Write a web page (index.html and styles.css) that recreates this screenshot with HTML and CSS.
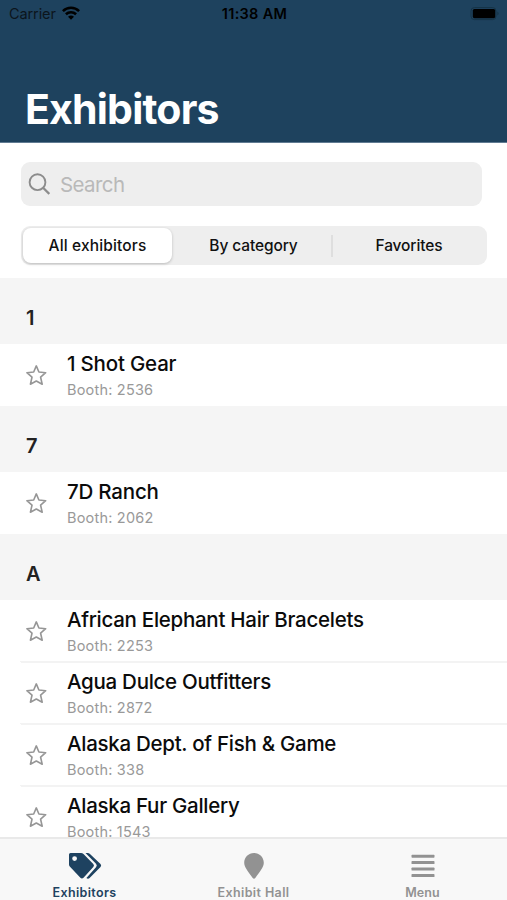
FILE: index.html
```html
<!DOCTYPE html>
<html lang="en">
<head>
<meta charset="utf-8">
<title>Exhibitors</title>
<link rel="stylesheet" href="styles.css">
</head>
<body>
<svg class="defs" aria-hidden="true">
  <symbol id="star" viewBox="0 0 22 22"><path d="M11.300 1.900 13.900 8 20.700 8.700 15.600 13.200 17.200 20.200 11.300 17 5.400 20.200 7 13.200 1.900 8.700 8.700 8Z" fill="none" stroke="#969696" stroke-width="1.600" stroke-linejoin="round"/></symbol>
</svg>
<div class="app">
  <header class="header">
    <div class="status">
      <div class="carrier"><span>Carrier</span>
        <svg class="wifi" width="18" height="14" viewBox="0 0 18 14" fill="none" stroke="#000" stroke-width="2.6"><path d="M.9 5.1C5.5.7 12.500.7 17.100 5.100"/><path d="M3.900 8.300C6.800 5.600 11.200 5.600 14.100 8.300"/><path d="M9 13.800 6 10.700Q9 8.400 12 10.700Z" fill="#000" stroke="none"/></svg>
      </div>
      <time class="clock">11:38 AM</time>
      <svg class="battery" width="30" height="14" viewBox="0 0 30 14"><rect x="1" y=".6" width="25" height="12" rx="3.4" fill="none" stroke="#163346" stroke-width="1"/><rect x="2.800" y="2" width="22.400" height="9.200" rx="1.600"/><path d="M27.400 4.600q2.400 2 0 4z" fill="#163346"/></svg>
    </div>
    <h1>Exhibitors</h1>
  </header>
  <main>
    <div class="search">
      <svg width="22" height="22" viewBox="0 0 22 22" fill="none" stroke="#8c8c8c" stroke-width="1.9"><circle cx="9.500" cy="9.200" r="7.900"/><path d="m15.100 14.800 6.200 6.100" stroke-width="2.300"/></svg>
      <span>Search</span>
    </div>
    <div class="segments">
      <div class="segment active"><span>All exhibitors</span></div>
      <div class="segment"><span>By category</span></div>
      <div class="segment divided"><span>Favorites</span></div>
    </div>
    <section><h2>1</h2>
      <article><svg class="star"><use href="#star"/></svg><div class="info"><h3>1 Shot Gear</h3><p>Booth: 2536</p></div></article>
    </section>
    <section><h2>7</h2>
      <article><svg class="star"><use href="#star"/></svg><div class="info"><h3>7D Ranch</h3><p>Booth: 2062</p></div></article>
    </section>
    <section><h2>A</h2>
      <article><svg class="star"><use href="#star"/></svg><div class="info"><h3>African Elephant Hair Bracelets</h3><p>Booth: 2253</p></div></article>
      <article><svg class="star"><use href="#star"/></svg><div class="info"><h3>Agua Dulce Outfitters</h3><p>Booth: 2872</p></div></article>
      <article><svg class="star"><use href="#star"/></svg><div class="info"><h3>Alaska Dept. of Fish &amp; Game</h3><p>Booth: 338</p></div></article>
      <article><svg class="star"><use href="#star"/></svg><div class="info"><h3>Alaska Fur Gallery</h3><p>Booth: 1543</p></div></article>
    </section>
  </main>
  <nav class="tabs">
    <div class="tab current"><svg width="34" height="28" viewBox="0 0 34 28"><path fill="#1e4260" fill-rule="evenodd" d="M2.500 1H13q1.500 0 2.500 1L25.300 12q1.400 1.500 0 3L15.500 25.700q-1.600 1.400-3.100 0L2 14.800Q1 13.800 1 12.400V2.500Q1 1 2.500 1ZM6.600 4.200a2.400 2.400 0 1 0 0 4.800 2.400 2.400 0 0 0 0-4.800Z"/><path fill="#1e4260" d="M17.500 1h2.200q1.200 0 2 .8L32.500 12q1.400 1.500 0 3L21.600 26q-1.700 1.500-3.200-.1L28 15.300q1.600-1.800 0-3.600Z"/></svg><span>Exhibitors</span></div>
    <div class="tab hall"><svg width="34" height="28" viewBox="0 0 34 28"><path fill="#929292" d="M17 1c5.500 0 9.800 4.300 9.800 9.700 0 4.500-4.300 9.300-8.500 15.200q-1.300 1.600-2.600 0C11.500 20 7.200 15.200 7.200 10.700 7.200 5.300 11.500 1 17 1Z"/></svg><span>Exhibit Hall</span></div>
    <div class="tab menu"><svg width="34" height="28" viewBox="0 0 34 28" fill="#929292"><rect x="5.500" y="2.800" width="23" height="3" rx=".7"/><rect x="5.500" y="9.100" width="23" height="3" rx=".7"/><rect x="5.500" y="15.600" width="23" height="3" rx=".7"/><rect x="5.500" y="22.100" width="23" height="3" rx=".7"/></svg><span>Menu</span></div>
  </nav>
</div>
</body>
</html>
```
FILE: styles.css
```css
* { box-sizing: border-box; }
body, h1, h2, h3, p { margin: 0; }
body { font-family: Inter, "Liberation Sans", sans-serif; background: #fff; overflow: hidden; }
.defs { display: none; }
.app { display: flex; flex-direction: column; width: 507px; height: 900px; overflow: hidden; }
.header { flex: none; height: 143px; background: #1e425e; border-bottom: 1px solid #607b92; }
.status { display: grid; grid-template-columns: 1fr auto 1fr; align-items: center; height: 28px; padding: 0 7px 0 9px; color: #000; }
.carrier { display: flex; align-items: center; gap: 6px; font-size: 14.5px; letter-spacing: -0.1px; color: #0c151c; }
.carrier span { margin-top: -1px; }
.wifi { margin-top: -3px; }
.clock { font-size: 14.5px; font-weight: 600; letter-spacing: 0.3px; margin-top: -1px; }
.battery { justify-self: end; margin-top: -1px; }
h1 { margin: 56px 0 0 25px; font-size: 41px; line-height: 50px; font-weight: 700; letter-spacing: -0.8px; color: #fff; }
main { flex: 1; min-height: 0; overflow: hidden; }
.search { display: flex; align-items: center; gap: 10px; height: 44px; margin: 19px 25px 0 21px; padding: 0 7px; border-radius: 9px; background: #eee; color: #b9b9b9; font-size: 20.5px; letter-spacing: -0.6px; }
.segments { display: grid; grid-template-columns: repeat(3, 1fr); height: 39px; margin: 20px 20px 13px 21px; padding: 2px; border-radius: 9px; background: #eee; font-size: 15.5px; font-weight: 500; color: #111; }
.segment { display: flex; align-items: center; justify-content: center; letter-spacing: -0.1px; padding-right: 1px; }
.segment.active { margin-right: 5px; padding: 0; border-radius: 8px; background: #fff; box-shadow: 0 1px 3px rgba(0,0,0,.22); letter-spacing: 0.15px; }
.segment.divided { padding: 0; }
.segment.divided::before { content: ""; width: 2px; height: 22px; background: #dedede; margin-right: auto; }
.segment.divided span { margin-right: auto; }
h2 { height: 66px; padding: 14px 0 0 26px; line-height: 52px; font-size: 20px; font-weight: 600; color: #222; background: #f5f5f5; }
article { display: flex; height: 62px; padding-left: 25px; }
.star { flex: none; width: 22px; height: 22px; margin-top: 20px; }
.info { padding: 7px 0 0 20px; }
h3 { font-size: 20.5px; line-height: 26px; font-weight: 500; letter-spacing: -0.28px; color: #0b0b0b; white-space: nowrap; }
article:only-of-type h3 { letter-spacing: -0.2px; }
p { margin-top: 4px; font-size: 14.5px; line-height: 18px; letter-spacing: 0.2px; color: #999; }
article + article { background: linear-gradient(#f3f3f3, #f3f3f3) 21px 0 / 100% 1px no-repeat; }
article:not(:last-child) { border-bottom: 1px solid; border-image: linear-gradient(90deg, transparent 21px, #f3f3f3 21px) 1; }
.tabs { flex: none; display: grid; grid-template-columns: repeat(3, 1fr); height: 63px; border-top: 2px solid #e9e9e9; background: #f8f8f8; }
.tab { display: flex; flex-direction: column; align-items: center; padding-top: 13px; font-size: 12.5px; line-height: 20px; font-weight: 600; letter-spacing: 0.35px; color: #929292; }
.tab span { margin-top: 3px; }
.tab.hall { letter-spacing: 0.4px; }
.tab.menu { letter-spacing: 0.1px; }
.tab.current { color: #1e4260; }
```
